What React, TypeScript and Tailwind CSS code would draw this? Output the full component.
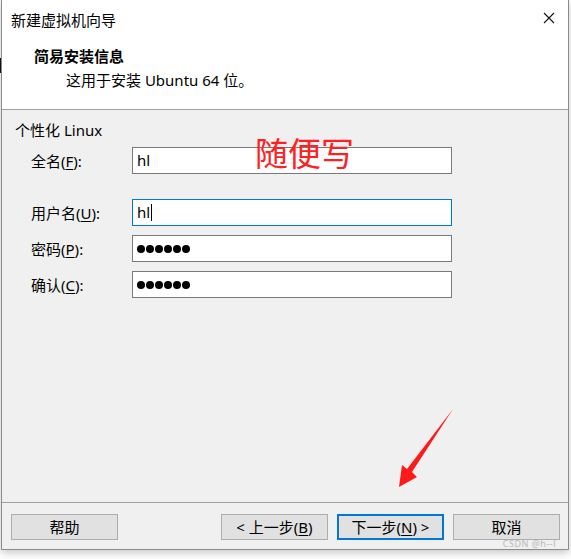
import React from 'react';

function Field({ label, hot, rest, children, focused }: { label: string; hot: string; rest?: string; children: React.ReactNode; focused?: boolean }) {
  return (
    <div className="flex items-center">
      <div className="w-[101px] text-[15px] leading-5">
        {label}(<span className="underline underline-offset-2">{hot}</span>){rest ?? ':'}
      </div>
      <div
        className={
          focused
            ? 'flex h-[27px] w-[320px] items-center border border-[#0078d7] bg-white pl-[4px] text-[15px]'
            : 'flex h-[27px] w-[320px] items-center border border-[#7a7a7a] bg-white pl-[4px] text-[15px]'
        }
      >
        {children}
      </div>
    </div>
  );
}

function Dots() {
  return (
    <div className="flex gap-[1px]">
      {[0, 1, 2, 3, 4, 5].map((i) => (
        <span key={i} className="inline-block h-[8px] w-[8px] rounded-full bg-black" />
      ))}
    </div>
  );
}

export default function App() {
  return (
    <div className="relative h-[559px] w-[571px] overflow-hidden bg-white font-['Noto_Sans','Noto_Sans_CJK_SC',sans-serif] text-black">
      <div className="absolute left-0 top-[58px] h-[15px] w-[1px] bg-[#111]" />
      <div className="relative ml-[1px] flex h-[550px] w-[568px] flex-col border-x border-b border-[#8a8a8a] bg-[#f0f0f0] shadow-[0_3px_8px_rgba(0,0,0,0.22)]">
        {/* header */}
        <div className="h-[110px] border-b border-[#a0a0a0] bg-white">
          <div className="flex h-[40px] items-center justify-between pl-[9px] pr-[13px]">
            <span className="text-[15px] leading-5">新建虚拟机向导</span>
            <svg width="12" height="12" viewBox="0 0 12 12" className="-mt-[4px]">
              <path d="M1 1 L11 11 M11 1 L1 11" stroke="#111" strokeWidth="1.1" fill="none" />
            </svg>
          </div>
          <div className="pl-[32px] pt-[6px] text-[15px] font-bold leading-5">简易安装信息</div>
          <div className="pl-[64px] pt-[4px] text-[15px] leading-5">这用于安装 Ubuntu 64 位。</div>
        </div>

        {/* body */}
        <div className="flex-1 pl-[13px]">
          <div className="mt-[10px] text-[15px] leading-5">个性化 Linux</div>
          <div className="ml-[16px] mt-[7px] flex flex-col">
            <Field label="全名" hot="F">
              <span>hl</span>
            </Field>
            <div className="mt-[25px]">
              <Field label="用户名" hot="U" focused>
                <span>hl</span>
                <span className="ml-[1px] inline-block h-[17px] w-[1px] bg-black" />
              </Field>
            </div>
            <div className="mt-[9px]">
              <Field label="密码" hot="P">
                <Dots />
              </Field>
            </div>
            <div className="mt-[9px]">
              <Field label="确认" hot="C">
                <Dots />
              </Field>
            </div>
          </div>
        </div>

        {/* footer */}
        <div className="flex h-[47px] border-t border-[#a0a0a0] pl-[9px] pr-[8px] pt-[11px]">
          <button className="h-[26px] w-[107px] border border-[#adadad] bg-[#e1e1e1] text-[15px] leading-5">帮助</button>
          <div className="ml-auto flex gap-[9px]">
            <button className="h-[26px] w-[107px] border border-[#adadad] bg-[#e1e1e1] text-[15px] leading-5">
              &lt; 上一步(<span className="underline underline-offset-2">B</span>)
            </button>
            <button className="h-[26px] w-[107px] border-2 border-[#0078d7] bg-[#e1e1e1] text-[15px] leading-5">
              下一步(<span className="underline underline-offset-2">N</span>) &gt;
            </button>
            <button className="h-[26px] w-[107px] border border-[#adadad] bg-[#e1e1e1] text-[15px] leading-5">取消</button>
          </div>
        </div>

        {/* annotations */}
        <div className="absolute left-[253px] top-[137px] text-[33px] font-normal leading-none text-[#ff2020]">随便写</div>
        <svg className="absolute left-0 top-0" width="568" height="550" viewBox="1 0 568 550">
          <polygon points="452,409 411,472 416,477 398,487 401,465 406,469" fill="#ff1a1a" />
        </svg>
        <div className="absolute bottom-[1px] right-[12px] text-[9px] leading-none tracking-[0.5px] text-[#b8b8b8]">CSDN @h--l</div>
      </div>
    </div>
  );
}
